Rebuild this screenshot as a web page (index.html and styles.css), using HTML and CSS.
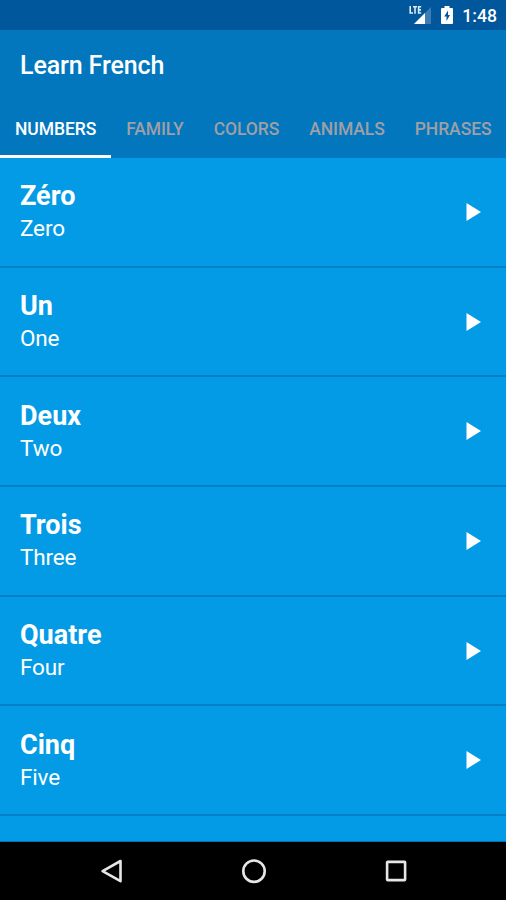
FILE: index.html
```
<!DOCTYPE html>
<html lang="en">

<head>
    <meta charset="UTF-8">
    <meta name="viewport" content="width=device-width, initial-scale=1.0">
    <title>Learn French</title>
    <link rel="stylesheet" href="styles.css">
</head>

<body>
    <div class="status-bar">
        <svg class="signal" width="23" height="20" viewBox="0 0 23 20">
            <path d="M22 2v17H5z" fill="#3d7cb5" />
            <path d="M16 8v11H5z" fill="#fff" />
            <path d="M0 0h13v9.5H0z" fill="#01579b" />
            <path d="M1.2 1v7H4M4 1.8h4M6 1.8v7M12.2 1.8H9.6V8h2.6M9.6 4.9h2.4" fill="none" stroke="#dceaf6" stroke-width="1.6" />
        </svg>
        <svg class="battery" width="12" height="18" viewBox="0 0 12 18">
            <path d="M3.5 0h5v2H11q1 0 1 1v14q0 1-1 1H1q-1 0-1-1V3q0-1 1-1h2.5z" fill="#fff" />
            <path d="M7 4.5L3.2 10.5h2.3V15L9 9H7z" fill="#01579b" />
        </svg>
        <span class="time">1:48</span>
    </div>

    <header>
        <h1>Learn French</h1>
        <nav class="tabs">
            <a class="tab active">NUMBERS</a>
            <a class="tab">FAMILY</a>
            <a class="tab">COLORS</a>
            <a class="tab">ANIMALS</a>
            <a class="tab">PHRASES</a>
        </nav>
    </header>

    <main class="list">
        <div class="row">
            <div class="words">
                <h2>Zéro</h2>
                <p>Zero</p>
            </div>
            <svg class="play" width="15" height="18" viewBox="0 0 15 18"><path d="M0.5 0l14.5 9-14.5 9z" /></svg>
        </div>
        <div class="row">
            <div class="words">
                <h2>Un</h2>
                <p>One</p>
            </div>
            <svg class="play" width="15" height="18" viewBox="0 0 15 18"><path d="M0.5 0l14.5 9-14.5 9z" /></svg>
        </div>
        <div class="row">
            <div class="words">
                <h2>Deux</h2>
                <p>Two</p>
            </div>
            <svg class="play" width="15" height="18" viewBox="0 0 15 18"><path d="M0.5 0l14.5 9-14.5 9z" /></svg>
        </div>
        <div class="row">
            <div class="words">
                <h2>Trois</h2>
                <p>Three</p>
            </div>
            <svg class="play" width="15" height="18" viewBox="0 0 15 18"><path d="M0.5 0l14.5 9-14.5 9z" /></svg>
        </div>
        <div class="row">
            <div class="words">
                <h2>Quatre</h2>
                <p>Four</p>
            </div>
            <svg class="play" width="15" height="18" viewBox="0 0 15 18"><path d="M0.5 0l14.5 9-14.5 9z" /></svg>
        </div>
        <div class="row">
            <div class="words">
                <h2>Cinq</h2>
                <p>Five</p>
            </div>
            <svg class="play" width="15" height="18" viewBox="0 0 15 18"><path d="M0.5 0l14.5 9-14.5 9z" /></svg>
        </div>
    </main>

    <footer class="nav-bar">
        <svg width="24" height="26" viewBox="0 0 24 26"><path d="M20.5 3v20.2L2.6 13.1z" /></svg>
        <svg width="26" height="26" viewBox="0 0 26 26"><circle cx="13" cy="13.2" r="10.7" /></svg>
        <svg width="24" height="26" viewBox="0 0 24 26"><rect x="3.1" y="3.9" width="18" height="18.2" rx="0.5" /></svg>
    </footer>
</body>

</html>
```
FILE: styles.css
```
* {
    box-sizing: border-box;
}

body {
    display: flex;
    flex-direction: column;
    height: 900px;
    margin: 0;
    overflow: hidden;
    font-family: Roboto, sans-serif;
    color: #fff;
    background-color: #039be5;
}

h1,
h2,
p {
    margin: 0;
}

.status-bar {
    display: flex;
    flex: none;
    justify-content: flex-end;
    align-items: center;
    height: 30px;
    padding-right: 9px;
    background-color: #01579b;
}

.signal {
    margin-top: -1px;
}

.battery {
    margin: 0 9px 0 9px;
}

.time {
    padding-top: 2px;
    font-size: 17.6px;
    font-weight: 500;
    line-height: 30px;
}

header {
    flex: none;
    height: 128px;
    background-color: #0277bd;
}

header h1 {
    height: 72px;
    padding-left: 20px;
    font-size: 25px;
    font-weight: 500;
    line-height: 72px;
    letter-spacing: -0.12px;
}

.tabs {
    display: flex;
    height: 56px;
}

.tab {
    padding: 0 15px;
    font-size: 17.5px;
    font-weight: 500;
    line-height: 55px;
    letter-spacing: -0.08px;
    color: #a09fa5;
}

.tab.active {
    color: #fff;
    border-bottom: 3px solid #fff;
}

.list {
    flex: 1;
    border-bottom: 1px solid #0272b5;
}

.row {
    display: flex;
    justify-content: space-between;
    align-items: center;
    height: 109.7px;
    padding: 0 25px 0 20px;
    border-bottom: 2px solid #0280c6;
}

.words {
    padding-bottom: 1.4px;
}

.row h2 {
    font-size: 27px;
    font-weight: 700;
    line-height: 34px;
}

.row p {
    font-size: 22.5px;
    line-height: 30px;
    letter-spacing: -0.15px;
}

.play {
    fill: #fff;
}

.nav-bar {
    display: flex;
    flex: none;
    justify-content: space-between;
    align-items: center;
    height: 58px;
    padding: 0 98px 0 100px;
    background-color: #000;
}

.nav-bar svg {
    fill: none;
    stroke: #e6e6e6;
    stroke-width: 2.6;
    stroke-linejoin: round;
}
```
